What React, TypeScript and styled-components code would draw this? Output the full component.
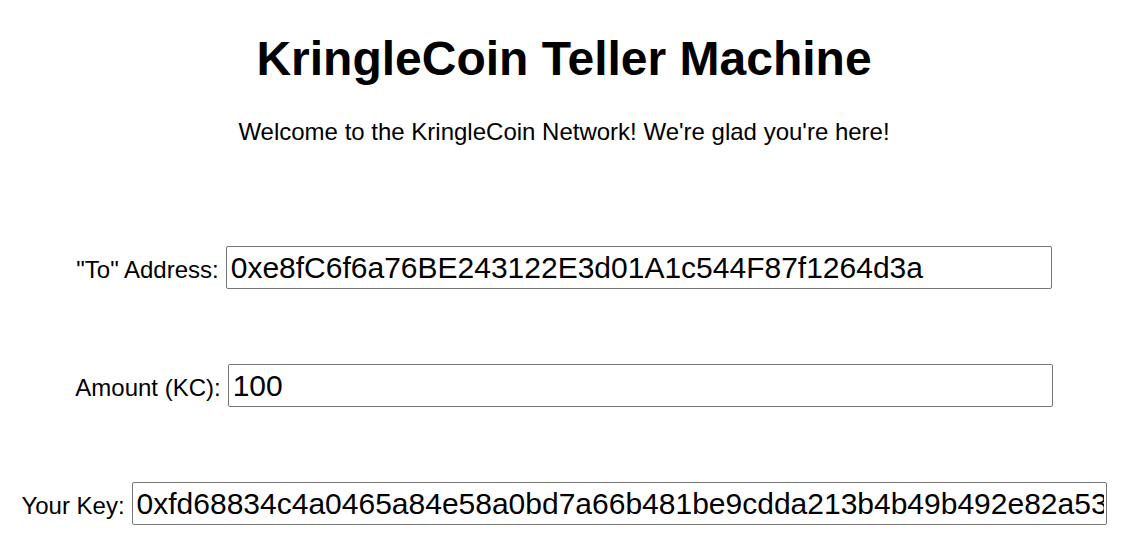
import React from "react";
import styled, { createGlobalStyle } from "styled-components";

const GlobalStyle = createGlobalStyle`
  html, body {
    margin: 0;
    padding: 0;
    background: #ffffff;
  }
  body {
    font-family: "Liberation Sans", Arial, sans-serif;
    color: #000000;
    overflow: hidden;
  }
`;

const Page = styled.main`
  display: flex;
  flex-direction: column;
  align-items: center;
  padding-left: 7px;
  padding-top: 31px;
`;

const Title = styled.h1`
  margin: 0;
  font-size: 48px;
  line-height: 55px;
  font-weight: 700;
  text-align: center;
`;

const Subtitle = styled.p`
  margin: 32px 0 0;
  font-size: 24px;
  line-height: 28px;
  text-align: center;
`;

const Form = styled.form`
  display: flex;
  flex-direction: column;
  align-items: center;
  gap: 75px;
  margin-top: 100px;
`;

const Row = styled.div`
  display: flex;
  align-items: baseline;
  justify-content: center;
  gap: 7px;
  white-space: nowrap;
`;

const Label = styled.label`
  font-size: 24px;
  line-height: 28px;
`;

const Field = styled.input<{ $width: number }>`
  box-sizing: border-box;
  width: ${(p) => p.$width}px;
  height: 43px;
  padding: 3px 2px 3px 4px;
  font-family: "Liberation Sans", Arial, sans-serif;
  font-size: 30px;
  color: #000000;
  background: #ffffff;
  border: 1px solid #767676;
  border-radius: 2px;
  outline: none;
`;

export default function App() {
  return (
    <>
      <GlobalStyle />
      <Page>
        <Title>KringleCoin Teller Machine</Title>
        <Subtitle>Welcome to the KringleCoin Network! We're glad you're here!</Subtitle>
        <Form onSubmit={(e) => e.preventDefault()}>
          <Row>
            <Label htmlFor="to">"To" Address:</Label>
            <Field
              id="to"
              $width={826}
              defaultValue="0xe8fC6f6a76BE243122E3d01A1c544F87f1264d3a"
            />
          </Row>
          <Row>
            <Label htmlFor="amount">Amount (KC):</Label>
            <Field id="amount" $width={825} defaultValue="100" />
          </Row>
          <Row>
            <Label htmlFor="key">Your Key:</Label>
            <Field
              id="key"
              $width={975}
              defaultValue="0xfd68834c4a0465a84e58a0bd7a66b481be9cdda213b4b49b492e82a53"
            />
          </Row>
        </Form>
      </Page>
    </>
  );
}
